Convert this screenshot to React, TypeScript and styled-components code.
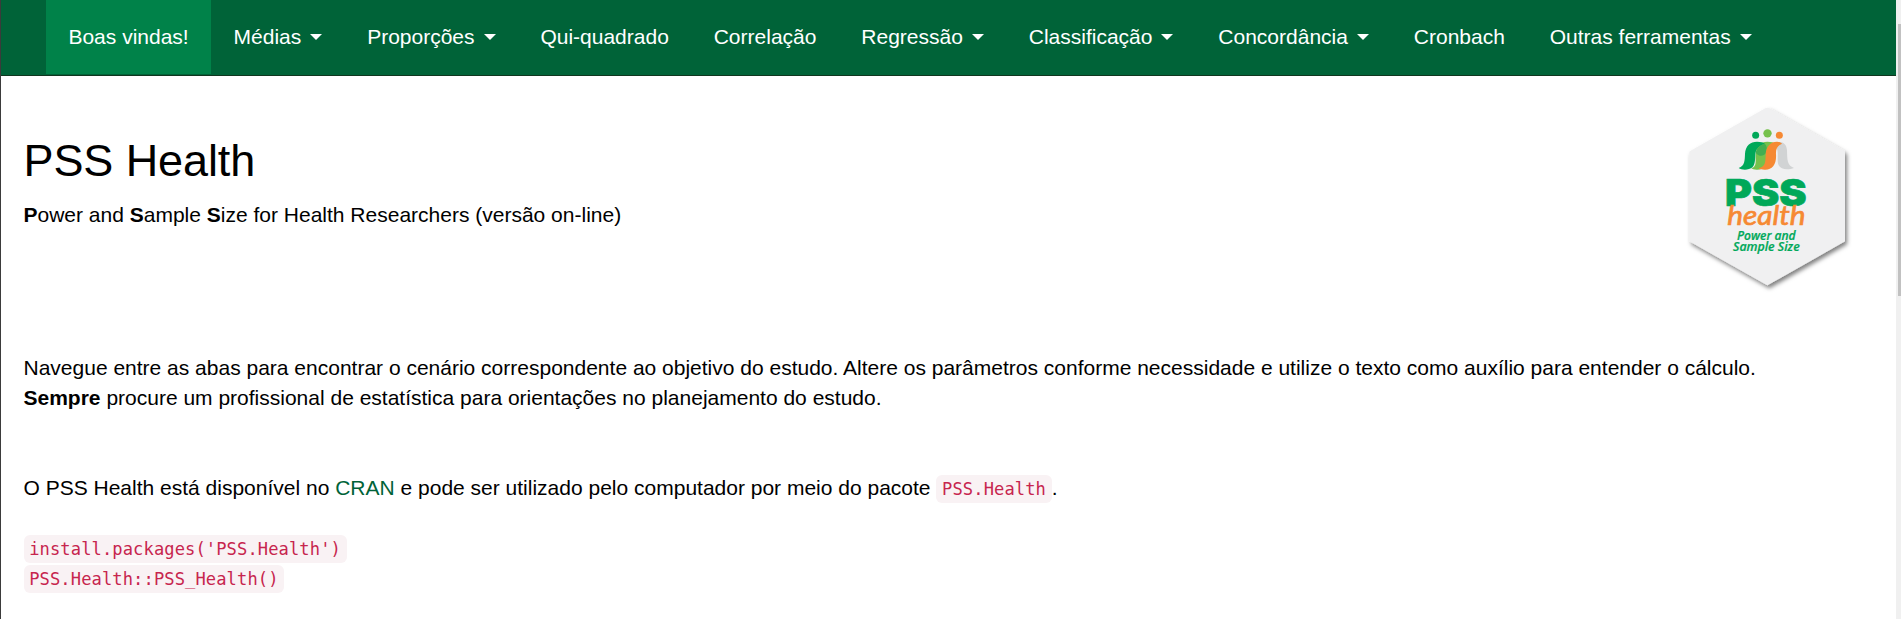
import React from 'react';
import styled, { createGlobalStyle } from 'styled-components';

const GlobalStyle = createGlobalStyle`
  * { box-sizing: border-box; }
  body {
    margin: 0;
    background: #fff;
    color: #000;
    font: 21px/30px "Liberation Sans", Arial, sans-serif;
    overflow: hidden;
  }
`;

const Window = styled.div`
  display: flex;
  height: 619px;
  border-left: 1px solid #3b3b3b;
`;

const Page = styled.div`
  flex: 1;
  min-width: 0;
`;

const ScrollTrack = styled.div`
  width: 5px;
  padding: 24px 0 0 2px;
  background: #f0f0f0;
`;

const ScrollThumb = styled.div`
  height: 272px;
  background: #c1c1c1;
`;

const Navbar = styled.nav`
  display: flex;
  height: 76px;
  padding-left: 45px;
  background: #006338;
  border-bottom: 1px solid #10361f;
`;

const NavItem = styled.a<{ $active?: boolean }>`
  display: flex;
  align-items: center;
  height: 74px;
  padding: 0 22.45px;
  color: #fff;
  white-space: nowrap;
  background: ${(p) => (p.$active ? '#008249' : 'transparent')};
`;

const Caret = styled.span`
  margin-left: 9px;
  border-top: 6px solid #fff;
  border-left: 6px solid transparent;
  border-right: 6px solid transparent;
`;

const Content = styled.main`
  padding-left: 22.5px;
`;

const Header = styled.header`
  display: flex;
  justify-content: space-between;
  height: 277px;
  padding-top: 14px;
`;

const Title = styled.h1`
  margin: 46px 0 14px;
  font-size: 45px;
  line-height: 50px;
  letter-spacing: -0.1px;
  font-weight: 400;
`;

const Paragraph = styled.p<{ $gap?: number }>`
  margin: 0 0 ${(p) => p.$gap ?? 0}px;
`;

const Link = styled.a`
  color: #006338;
`;

const Code = styled.code`
  padding: 4px 5.7px;
  border-radius: 6px;
  background: #f9f2f4;
  color: #c7254e;
  font: 17.1px/20px "DejaVu Sans Mono", monospace;
  letter-spacing: 0.1px;
`;

const Logo = styled.svg`
  width: 231px;
  height: 210px;
  margin-right: -5px;
`;

const items: { label: string; menu?: boolean }[] = [
  { label: 'Boas vindas!' },
  { label: 'Médias', menu: true },
  { label: 'Proporções', menu: true },
  { label: 'Qui-quadrado' },
  { label: 'Correlação' },
  { label: 'Regressão', menu: true },
  { label: 'Classificação', menu: true },
  { label: 'Concordância', menu: true },
  { label: 'Cronbach' },
  { label: 'Outras ferramentas', menu: true },
];

function PssLogo() {
  return (
    <Logo viewBox="0 0 693 630">
      <defs>
        <filter id="shadow" x="-10%" y="-10%" width="125%" height="125%">
          <feDropShadow dx="6" dy="9" stdDeviation="7" floodColor="#000" floodOpacity="0.5" />
        </filter>
      </defs>
      <path
        d="M286 55Q292 51 299 55L521 181Q525 183 525 187V454L292 586L58 454V187Q58 184 62 182Z"
        fill="#f0f0f1"
        filter="url(#shadow)"
      />
      <circle cx="257" cy="136" r="10.5" fill="#00a859" />
      <circle cx="292.5" cy="130" r="12.5" fill="#76c14c" />
      <circle cx="328" cy="136" r="10.5" fill="#f68933" />
      <path d="M318 158C336 152 350 161 351 181C352 210 351 226 372 234C357 240 333 241 326 226C321 216 324 199 323 188C323 173 316 166 304 161Z" fill="#d1d3d4" />
      <path d="M244 235C262 229 256 212 257 194C258 169 271 155 292 155C304 155 311 157 317 162C302 167 294 178 294 197C294 222 283 240 260 239C252 239 247 237 244 235Z" fill="#76c14c" />
      <path d="M206 234C225 227 224 211 225 192C226 167 241 155 261 155C273 155 280 157 285 161C269 166 257 175 256 194C255 215 255 232 237 237C224 241 213 238 206 234Z" fill="#00a859" />
      <path d="M257 188C260 175 270 165 284 161C291 167 292 176 287 190C282 200 264 200 257 188Z" fill="#43ae51" />
      <path d="M266 235C288 229 286 213 287 194C288 169 301 155 321 155C328 155 333 158 336 161C323 166 317 175 318 193C320 223 307 240 284 239C276 239 270 238 266 235Z" fill="#f68933" />
      <text x="165" y="348" fill="#00a859" stroke="#00a859" strokeWidth="2" fontFamily="Inter, sans-serif" fontWeight="900" fontSize="110" textLength="245" lengthAdjust="spacingAndGlyphs">PSS</text>
      <text x="172" y="404" fill="#f68933" stroke="#f68933" strokeWidth="2" fontFamily="Lato, sans-serif" fontStyle="italic" fontWeight="400" fontSize="81" textLength="235" lengthAdjust="spacingAndGlyphs">health</text>
      <text x="201" y="450" fill="#00a859" stroke="#00a859" strokeWidth="0.7" fontFamily="Open Sans, sans-serif" fontStyle="italic" fontWeight="600" fontSize="35" textLength="176" lengthAdjust="spacingAndGlyphs">Power and</text>
      <text x="189" y="484" fill="#00a859" stroke="#00a859" strokeWidth="0.7" fontFamily="Open Sans, sans-serif" fontStyle="italic" fontWeight="600" fontSize="35" textLength="200" lengthAdjust="spacingAndGlyphs">Sample Size</text>
    </Logo>
  );
}

export default function App() {
  return (
    <>
      <GlobalStyle />
      <Window>
        <Page>
          <Navbar>
            {items.map((item, i) => (
              <NavItem key={item.label} $active={i === 0}>
                {item.label}
                {item.menu && <Caret />}
              </NavItem>
            ))}
          </Navbar>
          <Content>
            <Header>
              <div>
                <Title>PSS Health</Title>
                <Paragraph>
                  <b>P</b>ower and <b>S</b>ample <b>S</b>ize for Health Researchers (versão on-line)
                </Paragraph>
              </div>
              <PssLogo />
            </Header>
            <Paragraph $gap={60}>
              Navegue entre as abas para encontrar o cenário correspondente ao objetivo do estudo. Altere os
              parâmetros conforme necessidade e utilize o texto como auxílio para entender o cálculo.
              <br />
              <b>Sempre</b> procure um profissional de estatística para orientações no planejamento do estudo.
            </Paragraph>
            <Paragraph $gap={30}>
              O PSS Health está disponível no <Link>CRAN</Link> e pode ser utilizado pelo computador por meio do
              pacote <Code>PSS.Health</Code>.
            </Paragraph>
            <Paragraph>
              <Code>install.packages('PSS.Health')</Code>
              <br />
              <Code>PSS.Health::PSS_Health()</Code>
            </Paragraph>
          </Content>
        </Page>
        <ScrollTrack>
          <ScrollThumb />
        </ScrollTrack>
      </Window>
    </>
  );
}
